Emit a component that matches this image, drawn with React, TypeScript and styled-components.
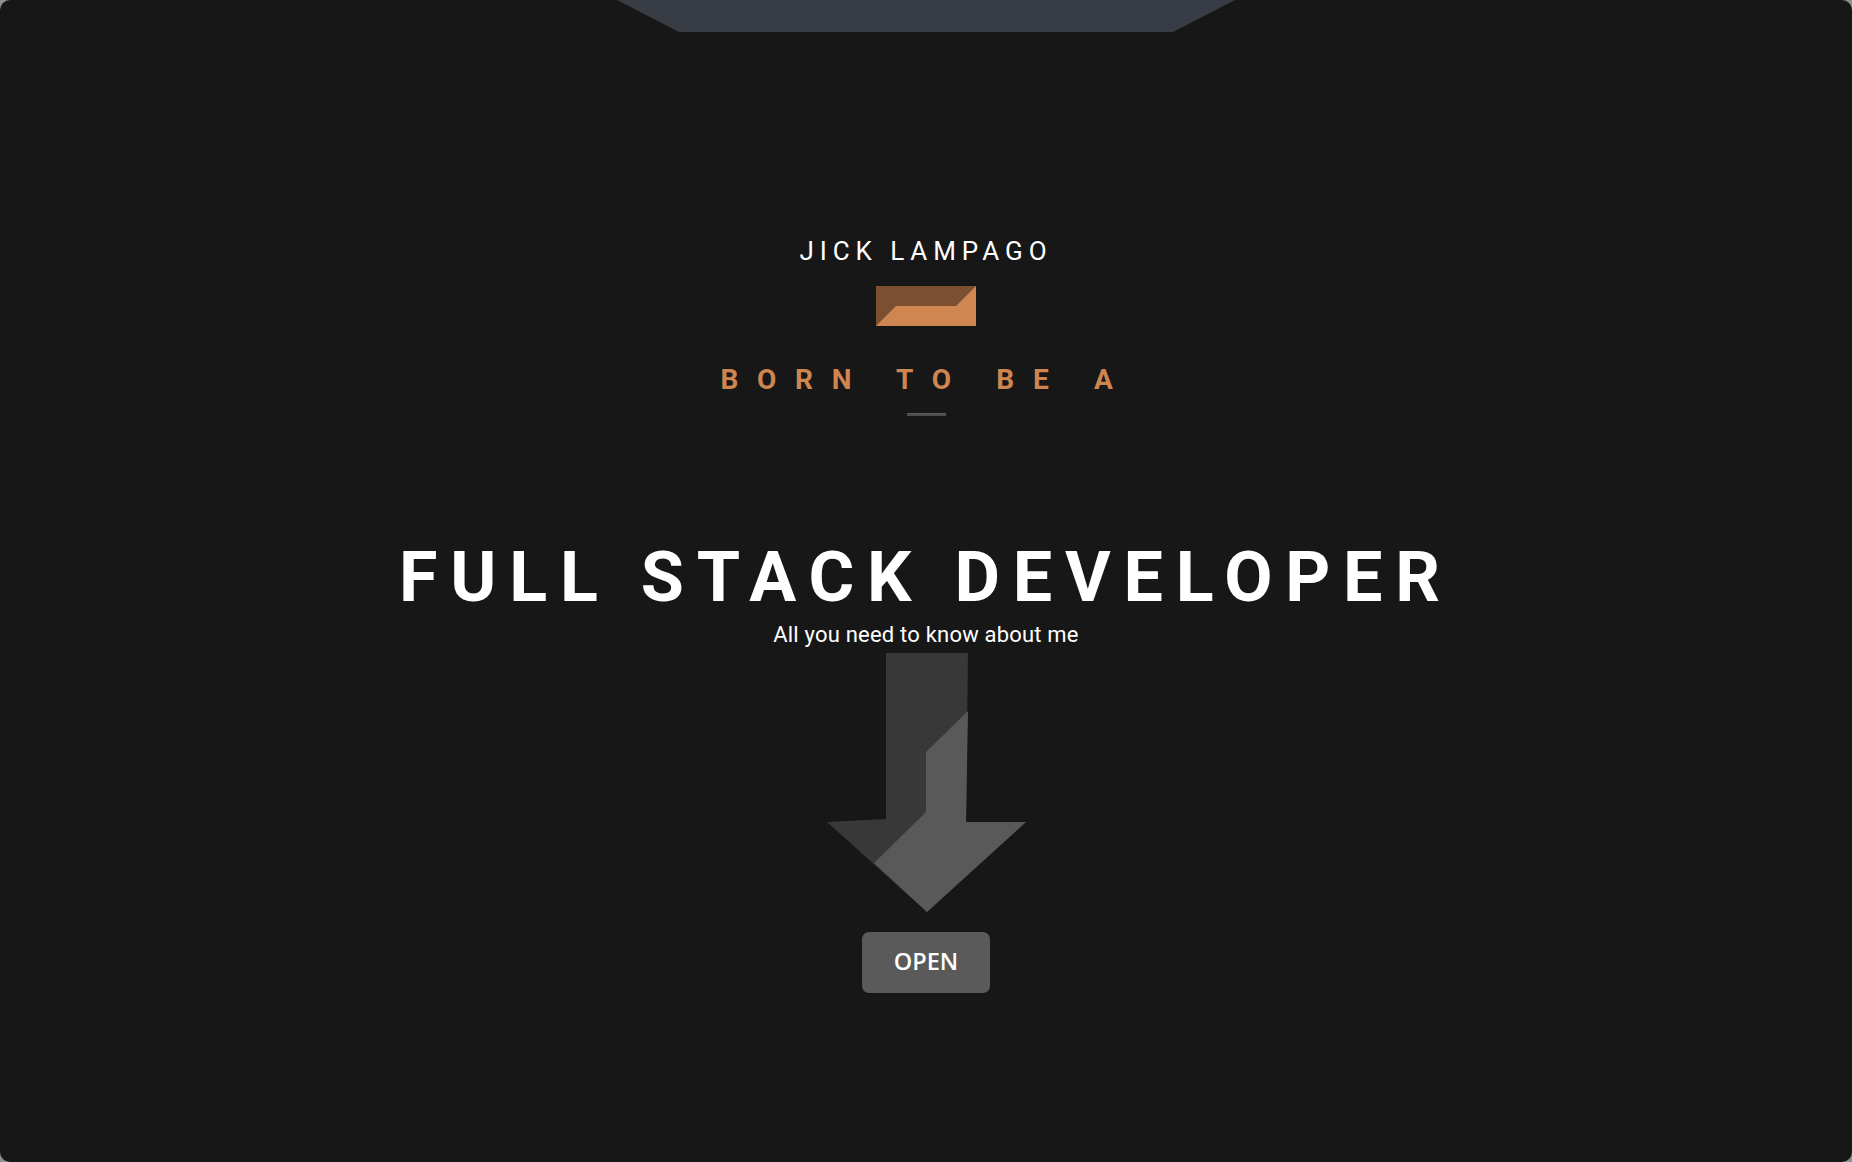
import React from "react";
import styled, { createGlobalStyle } from "styled-components";

const GlobalStyle = createGlobalStyle`
  html, body {
    margin: 0;
    padding: 0;
    background: #8f8f8f;
  }
  * { box-sizing: border-box; }
`;

const Screen = styled.main`
  width: 100vw;
  height: 100vh;
  background: #171717;
  border-radius: 10px;
  overflow: hidden;
  display: flex;
  flex-direction: column;
  align-items: center;
  font-family: Roboto, "Liberation Sans", sans-serif;
`;

const TopTab = styled.div`
  width: 618px;
  height: 32px;
  flex: none;
  background: #383c44;
  clip-path: polygon(0 0, 100% 0, calc(100% - 62px) 100%, 62px 100%);
`;

const Name = styled.h2`
  margin: 206px 0 0;
  font-size: 26px;
  line-height: 26px;
  font-weight: 400;
  letter-spacing: 5.9px;
  color: #ffffff;
`;

const LogoWrap = styled.div`
  margin-top: 22px;
  width: 100px;
  height: 40px;
  display: flex;
`;

const Tagline = styled.h3`
  margin: 40px 0 0;
  font-size: 28px;
  line-height: 28px;
  font-weight: 700;
  letter-spacing: 18.7px;
  word-spacing: 1px;
  color: #cf8550;
`;

const Underline = styled.div`
  margin-top: 19px;
  width: 39px;
  height: 3px;
  background: #4c4c4c;
  border-top: 1px solid #5e5e5e;
`;

const Title = styled.h1`
  margin: 126px 0 0;
  font-size: 70px;
  line-height: 70px;
  font-weight: 700;
  letter-spacing: 12.8px;
  color: #ffffff;
`;

const Subtitle = styled.p`
  margin: 12px 0 0;
  font-size: 22px;
  line-height: 22px;
  font-weight: 400;
  letter-spacing: 0.2px;
  color: #ffffff;
`;

const ArrowWrap = styled.div`
  margin-top: 7px;
  width: 199px;
  height: 259px;
  display: flex;
`;

const OpenButton = styled.button`
  margin-top: 20px;
  width: 128px;
  height: 61px;
  padding: 0 0 4px;
  border: none;
  border-radius: 7px;
  background: #5a5a5a;
  color: #ffffff;
  font-family: "Open Sans", "Noto Sans", sans-serif;
  font-weight: 600;
  font-size: 23.5px;
  cursor: pointer;
  display: flex;
  align-items: center;
  justify-content: center;
`;

const Logo = () => (
  <LogoWrap>
    <svg width="100" height="40" viewBox="0 0 100 40">
      <rect x="0" y="0" width="100" height="40" fill="#7b5030" />
      <polygon points="0,40 20,20 80,20 100,0 100,40" fill="#cf8650" />
    </svg>
  </LogoWrap>
);

const DownArrow = () => (
  <ArrowWrap>
    <svg width="199" height="259" viewBox="0 0 199 259">
      <polygon
        points="59,0 141,0 139,169 199,169 100,259 0,169 59,166"
        fill="#383838"
      />
      <polygon
        points="141,58 99,99 99,159 47,210 100,259 199,169 139,169"
        fill="#595959"
      />
    </svg>
  </ArrowWrap>
);

export default function App() {
  return (
    <>
      <GlobalStyle />
      <Screen>
        <TopTab />
        <Name>JICK LAMPAGO</Name>
        <Logo />
        <Tagline>BORN TO BE A</Tagline>
        <Underline />
        <Title>FULL STACK DEVELOPER</Title>
        <Subtitle>All you need to know about me</Subtitle>
        <DownArrow />
        <OpenButton>OPEN</OpenButton>
      </Screen>
    </>
  );
}
